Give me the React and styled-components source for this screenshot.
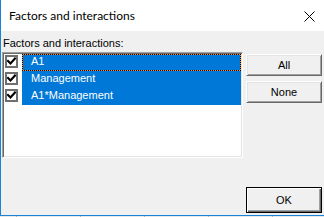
import React from "react";
import styled, { createGlobalStyle } from "styled-components";

const GlobalStyle = createGlobalStyle`
  html, body {
    margin: 0;
    padding: 0;
    background: #e6e6e6;
  }
  body {
    width: 324px;
    height: 217px;
    overflow: hidden;
    font-family: "Liberation Sans", Arial, sans-serif;
  }
`;

const factors = [
  { name: "A1", checked: true, selected: true, focused: true },
  { name: "Management", checked: true, selected: true },
  { name: "A1*Management", checked: true, selected: true },
];

const App = () => {
  return (
    <>
      <GlobalStyle />
      <Screen>
        <Window>
          <TitleBar>
            <Title>Factors and interactions</Title>
            <CloseButton aria-label="Close">
              <svg width="11" height="11" viewBox="0 0 11 11">
                <path
                  d="M0.5 0.5 L10.5 10.5 M10.5 0.5 L0.5 10.5"
                  stroke="#000"
                  strokeWidth="1"
                  fill="none"
                />
              </svg>
            </CloseButton>
          </TitleBar>
          <Body>
            <Main>
              <LeftColumn>
                <FieldLabel>Factors and interactions:</FieldLabel>
                <ListBox>
                  {factors.map((f) => (
                    <Item key={f.name}>
                      <CheckSlot>
                        <CheckBox>
                          {f.checked && (
                            <svg width="9" height="9" viewBox="0 0 9 9">
                              <path
                                d="M1 4 L3.5 6.5 L8 1.5"
                                stroke="#000"
                                strokeWidth="2.2"
                                fill="none"
                                strokeLinecap="square"
                              />
                            </svg>
                          )}
                        </CheckBox>
                      </CheckSlot>
                      <ItemText $selected={f.selected} $focused={f.focused}>
                        {f.name}
                      </ItemText>
                    </Item>
                  ))}
                </ListBox>
              </LeftColumn>
              <ButtonColumn>
                <Button>All</Button>
                <Button>None</Button>
              </ButtonColumn>
            </Main>
            <Footer>
              <Button $default $tall>
                OK
              </Button>
            </Footer>
          </Body>
        </Window>
        <Taskbar />
      </Screen>
    </>
  );
};

const Screen = styled.div`
  width: 324px;
  height: 217px;
  display: flex;
  flex-direction: column;
`;

const Window = styled.div`
  box-sizing: border-box;
  height: 216px;
  display: flex;
  flex-direction: column;
  background: #f0f0f0;
  border-left: 1px solid #1883d7;
  border-bottom: 1px solid #1883d7;
`;

const Taskbar = styled.div`
  height: 1px;
  background: repeating-linear-gradient(
    90deg,
    #e8e8e8 0 16px,
    #b8b8b8 16px 17px,
    #e8e8e8 17px 64px
  );
`;

const TitleBar = styled.div`
  box-sizing: border-box;
  height: 31px;
  flex-shrink: 0;
  display: flex;
  align-items: flex-start;
  padding: 8px 0 0 8px;
  background: #fff;
`;

const Title = styled.span`
  font-family: Lato, "Noto Sans", sans-serif;
  font-size: 12px;
  line-height: 15px;
  color: #000;
`;

const CloseButton = styled.div`
  margin: 3px 9px 0 auto;
  width: 11px;
  height: 11px;
  display: flex;

  svg {
    display: block;
  }
`;

const Body = styled.div`
  flex: 1;
  display: flex;
  flex-direction: column;
  padding: 5px 2px 2px 1px;
`;

const Main = styled.div`
  display: flex;
  gap: 3px;
`;

const LeftColumn = styled.div`
  width: 241px;
  display: flex;
  flex-direction: column;
`;

const FieldLabel = styled.div`
  margin: 0 0 2px 1px;
  font-size: 11px;
  line-height: 14px;
  height: 14px;
  color: #000;
  white-space: nowrap;
`;

const ListBox = styled.div`
  box-sizing: border-box;
  height: 106px;
  padding: 1px;
  background: #fff;
  border: 1px solid;
  border-color: #a0a0a0 #fff #fff #a0a0a0;
  box-shadow: inset 1px 1px #696969, inset -1px -1px #e3e3e3;
`;

const Item = styled.div`
  display: flex;
  height: 17px;
`;

const CheckSlot = styled.div`
  width: 18px;
  flex-shrink: 0;
  padding: 1px 0 0 1px;
  box-sizing: border-box;
`;

const CheckBox = styled.div`
  box-sizing: border-box;
  width: 13px;
  height: 13px;
  background: #fff;
  border: 2px solid #6f6f6f;
  display: flex;
  align-items: center;
  justify-content: center;

  svg {
    display: block;
  }
`;

const ItemText = styled.div`
  position: relative;
  flex: 1;
  box-sizing: border-box;
  padding: 0 0 3px 9px;
  font-size: 11px;
  line-height: 14px;
  white-space: nowrap;
  color: ${(p) => (p.$selected ? "#fff" : "#000")};
  background: ${(p) => (p.$selected ? "#0078d7" : "transparent")};
  box-shadow: ${(p) => (p.$focused ? "inset 0 0 0 1px #ff8c1a" : "none")};

  &::after {
    content: "";
    display: ${(p) => (p.$focused ? "block" : "none")};
    position: absolute;
    inset: 0;
    border: 1px dotted #000;
  }
`;

const ButtonColumn = styled.div`
  width: 76px;
  display: flex;
  flex-direction: column;
  gap: 5px;
  padding-top: 18px;
`;

const Button = styled.div`
  box-sizing: border-box;
  width: 76px;
  height: ${(p) => (p.$tall ? "26px" : "22px")};
  display: flex;
  align-items: center;
  justify-content: center;
  font-size: 11px;
  color: #000;
  background: #f0f0f0;
  border: 1px solid;
  border-color: ${(p) =>
    p.$default ? "#000" : "#fff #696969 #696969 #fff"};
  box-shadow: ${(p) =>
    p.$default
      ? "inset 1px 1px #fff, inset -1px -1px #696969, inset -2px -2px #a0a0a0"
      : "inset 1px 1px #e3e3e3, inset -1px -1px #a0a0a0"};
`;

const Footer = styled.div`
  margin-top: auto;
  display: flex;
  justify-content: flex-end;
`;

export default App;
